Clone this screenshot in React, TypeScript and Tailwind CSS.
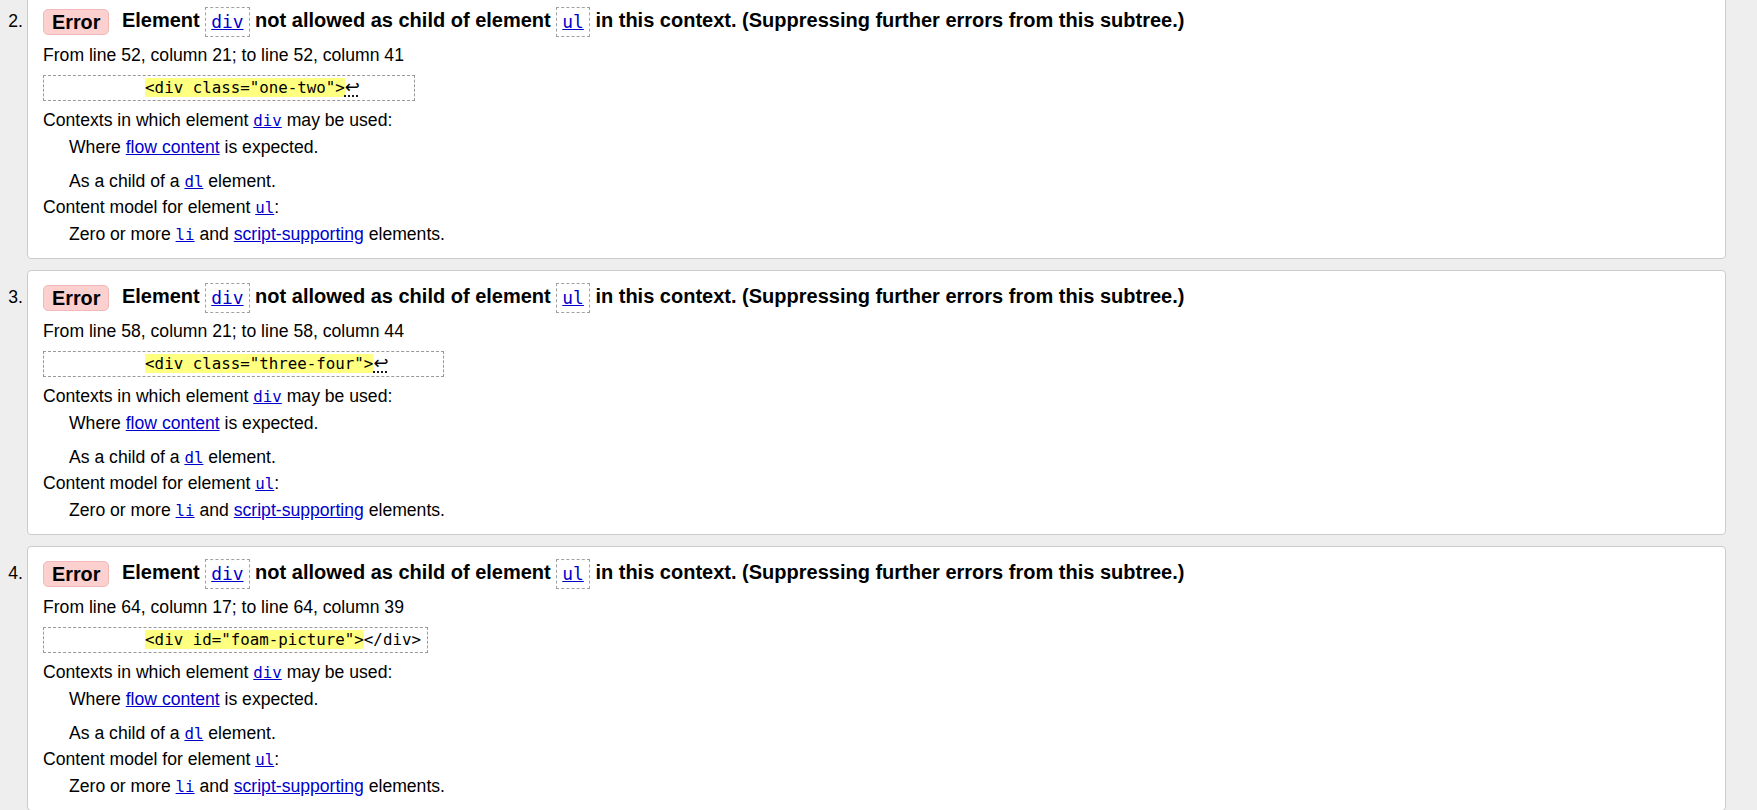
import React from "react";

type Card = {
  n: number;
  line: number;
  c1: number;
  c2: number;
  code: string;
  tail: "lf" | "close";
};

const cards: Card[] = [
  { n: 2, line: 52, c1: 21, c2: 41, code: '<div class="one-two">', tail: "lf" },
  { n: 3, line: 58, c1: 21, c2: 44, code: '<div class="three-four">', tail: "lf" },
  { n: 4, line: 64, c1: 17, c2: 39, code: '<div id="foam-picture">', tail: "close" },
];

function HeadCode({ children }: { children: React.ReactNode }) {
  return (
    <span className="inline-block align-middle h-[30px] leading-[28px] px-[5px] border border-dashed border-[#a0a0a0] font-normal font-['DejaVu_Sans_Mono',monospace] text-[17.9px] text-[#0000cc] underline">
      {children}
    </span>
  );
}

function InlineCode({ children }: { children: React.ReactNode }) {
  return (
    <span className="leading-none font-['DejaVu_Sans_Mono',monospace] text-[15.8px] text-[#0000cc] underline">
      {children}
    </span>
  );
}

function Link({ children }: { children: React.ReactNode }) {
  return <span className="text-[#0000cc] underline">{children}</span>;
}

function ErrorCard({ c }: { c: Card }) {
  return (
    <li className="flex">
      <div className="w-[27px] shrink-0 pr-[4px] text-right pt-[14px] leading-[26px]">
        {c.n}.
      </div>
      <div className="flex-1 bg-white border border-[#cccccc] rounded-[4px] pl-[15px] pt-[13.4px] pb-[10.3px]">
        <div className="flex items-center h-[26px] font-bold text-[20px]">
          <span className="h-[26px] px-[8px] leading-[24px] rounded-[5px] bg-[#fdd0d0] border border-[#f3b9b9] text-[19.8px]">
            Error
          </span>
          <span className="ml-[12.5px] whitespace-nowrap leading-none">
            Element <HeadCode>div</HeadCode> not allowed as child of element{" "}
            <HeadCode>ul</HeadCode> in this context. (Suppressing further errors from this
            subtree.)
          </span>
        </div>
        <div className="mt-[7.4px] h-[26.4px] leading-[26.4px]">
          From line {c.line}, column {c.c1}; to line {c.line}, column {c.c2}
        </div>
        <div className="mt-[6.2px] flex h-[26.4px]">
          <code className="inline-block h-[26.4px] border border-dashed border-[#9a9a9a] px-[6px] leading-[24.4px] whitespace-pre font-['DejaVu_Sans_Mono',monospace] text-[15.8px] text-black">
            {"          "}
            <mark className="bg-[#ffff80] text-black">{c.code}</mark>
            {c.tail === "lf" ? (
              <>
                <span className="inline-block w-[16px] text-[18px] leading-none font-['DejaVu_Sans',sans-serif] underline decoration-dotted underline-offset-[3px]">
                  ↩
                </span>
                {"     "}
              </>
            ) : (
              "</div>"
            )}
          </code>
        </div>
        <dl className="mt-[6px] leading-[26.7px]">
          <dt className="h-[26.7px]">
            Contexts in which element <InlineCode>div</InlineCode> may be used:
          </dt>
          <dd className="h-[26.7px] pl-[26px]">
            Where <Link>flow content</Link> is expected.
          </dd>
          <dd className="h-[26.7px] pl-[26px] mt-[7.2px]">
            As a child of a <InlineCode>dl</InlineCode> element.
          </dd>
          <dt className="h-[26.7px]">
            Content model for element <InlineCode>ul</InlineCode>:
          </dt>
          <dd className="h-[26.7px] pl-[26px]">
            Zero or more <InlineCode>li</InlineCode> and <Link>script-supporting</Link>{" "}
            elements.
          </dd>
        </dl>
      </div>
    </li>
  );
}

export default function App() {
  return (
    <div className="h-[810px] overflow-hidden bg-[#eeeeee] pr-[31px] text-black text-[17.6px] font-['Liberation_Sans',Arial,sans-serif]">
      <ol className="-mt-[5.7px] flex flex-col gap-[11.3px]">
        {cards.map((c) => (
          <ErrorCard key={c.n} c={c} />
        ))}
      </ol>
    </div>
  );
}
